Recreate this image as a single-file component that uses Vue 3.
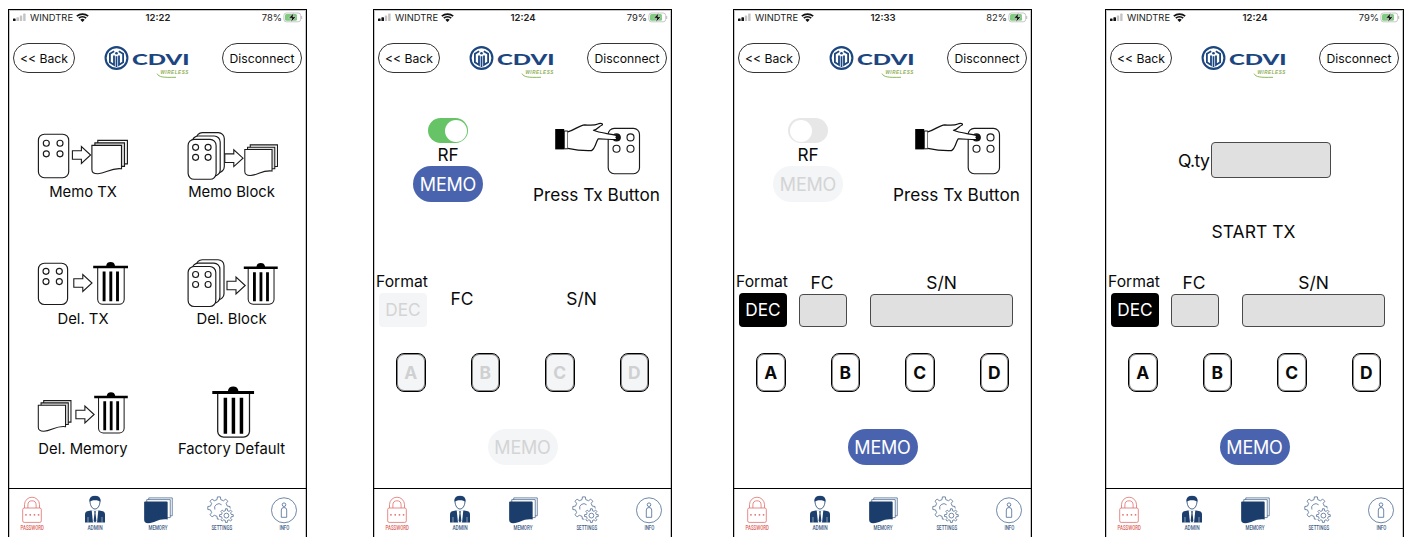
<script setup>
import { h } from 'vue'

const screens = [
  { kind: 'menu', time: '12:22', battery: '78%', bars: 1 },
  { kind: 'rf', time: '12:24', battery: '79%', bars: 2, rf: true },
  { kind: 'rf', time: '12:33', battery: '82%', bars: 2, rf: false },
  { kind: 'qty', time: '12:24', battery: '79%', bars: 2 },
]
const keys = ['A', 'B', 'C', 'D']
const signal = [
  { x: 13, w: 2.6, h: 2.6 },
  { x: 16.4, w: 2.6, h: 3.8 },
  { x: 19.8, w: 2.4, h: 5.6 },
  { x: 23.2, w: 2.4, h: 7.4 },
]
const ink = { fill: '#fff', stroke: '#1a1a1a', 'stroke-width': 1.15 }

// key fob with four buttons
const Fob = ({ x, y, w, ht, cx, cy, dx, dy, r = 3, stack }) => {
  const box = (ox, oy) => h('rect', { x: x + ox, y: y + oy, width: w, height: ht, rx: 6, ...ink })
  const dots = [[0, 0], [1, 0], [0, 1], [1, 1]].map(([i, j]) =>
    h('circle', { cx: cx + i * dx, cy: cy + j * dy, r, ...ink }))
  return h('g', [...(stack ? [box(8.2, -6.8), box(4.1, -3.4)] : []), box(0, 0), ...dots])
}
Fob.props = ['x', 'y', 'w', 'ht', 'cx', 'cy', 'dx', 'dy', 'r', 'stack']

const Arrow = ({ x, y }) => h('path', {
  d: `M${x} ${y - 4.3}h9v-4.1l9.2 8.4l-9.2 8.4v-4.1h-9z`, ...ink, 'stroke-width': 1.1,
})
Arrow.props = ['x', 'y']

// stack of memory sheets
const sheet = 'M0 0H29.6V23.4C19 22 14 28.3 6 28.3C1.5 28.3 0 26.8 0 24Z'
const Sheets = ({ x, y, s = 1 }) => h('g', { transform: `translate(${x} ${y}) scale(${s})` },
  [[5.9, -5], [3, -2.5], [0, 0]].map(([a, b], i) =>
    h('path', { d: i === 2 ? sheet : 'M0 0H29.6V23.4H22L0 20Z', transform: `translate(${a} ${b})`, ...ink, fill: i === 1 ? '#ddd' : '#fff' })))
Sheets.props = ['x', 'y', 's']

const Trash = ({ x, y, s = 1 }) => h('g', { transform: `translate(${x} ${y}) scale(${s})` }, [
  h('path', { d: 'M4.5 6V37.5A5 5 0 0 0 9.5 42.2H26A5 5 0 0 0 31 37.5V6', ...ink, 'stroke-width': 1.05 }),
  h('path', { d: 'M0 3.7H13C13.4 1 15 0 17.4 0S21.4 1 21.8 3.7H34.8V6.2H0Z', fill: '#000' }),
  h('path', { d: 'M10.9 9.4V39.3M17.6 9.4V39.3M24.3 9.4V39.3', stroke: '#000', 'stroke-width': 2.9, fill: 'none' }),
])
Trash.props = ['x', 'y', 's']

const gear = (cx, cy, n, ro, ri) => {
  const step = (Math.PI * 2) / n
  const pts = []
  for (let i = 0; i < n; i++) {
    for (const [f, r] of [[-0.28, ri], [-0.17, ro], [0.17, ro], [0.28, ri]]) {
      const a = (i + f) * step - Math.PI / 2
      pts.push(`${(cx + r * Math.cos(a)).toFixed(2)} ${(cy + r * Math.sin(a)).toFixed(2)}`)
    }
  }
  return `M${pts.join('L')}Z`
}
const bigGear = gear(218.8, 508, 8, 11.2, 8.6)
const smallGear = gear(226.3, 515.6, 8, 6.9, 5)
</script>

<template>
  <main class="board">
    <section v-for="(s, i) in screens" :key="i" class="phone">
      <div class="status">
        <span class="carrier">
          <svg class="bars" width="13" height="9" viewBox="13 13 13 9">
            <rect v-for="(b, n) in signal" :key="n" :x="b.x" :y="21 - b.h" :width="b.w" :height="b.h" rx=".6"
              :fill="n < s.bars ? '#111' : '#c4c4c4'" />
          </svg>
          WINDTRE
          <svg class="wifi" width="13" height="9" viewBox="0 0 13 9">
            <path d="M.8 3.2A8.6 8.6 0 0 1 12.2 3.2M2.8 5.2A5.6 5.6 0 0 1 10.2 5.2" fill="none" stroke="#111" stroke-width="1.7" />
            <path d="M6.5 8.9L4.3 6.7A3.2 3.2 0 0 1 8.7 6.7Z" fill="#111" />
          </svg>
        </span>
        <b class="time">{{ s.time }}</b>
        <span class="power">{{ s.battery }}
          <svg width="20" height="11" viewBox="0 0 20 11">
            <rect x=".9" y="1" width="16.8" height="8.8" rx="2.5" fill="#fff" stroke="#b9b9b9" stroke-width=".8" />
            <rect x="2" y="2.1" width="12" height="6.6" rx="1.5" fill="#7fcb7f" />
            <path d="M18.7 4v3" stroke="#bbb" stroke-width="1" />
            <path d="M10.8 .8L5.6 6.2H8.8L7.8 10.2L13.2 4.8H9.9Z" fill="#111" stroke="#fff" stroke-width=".5" />
          </svg>
        </span>
      </div>

      <header class="head">
        <button class="pill back">&lt;&lt; Back</button>
        <svg class="logo" width="88" height="36" viewBox="103 45 88 36">
          <circle cx="116.5" cy="58" r="10.9" fill="#fff" stroke="#1c4680" stroke-width="2.1" />
          <path d="M114.2 51.2L109.9 53.7V62.3L114 64.9V55.5M118.8 51.2L123.1 53.7V62.3L119 64.9V55.5" fill="none" stroke="#1c4680" stroke-width="1.8" />
          <path d="M116.5 56.2V67" stroke="#1c4680" stroke-width="1.7" />
          <circle cx="116.5" cy="53.2" r="1.3" fill="#1c4680" />
          <text x="132" y="64.5" font-family="Lato" font-weight="900" font-size="14.8" textLength="57.500" lengthAdjust="spacingAndGlyphs" fill="#1c4680">CDVI</text>
          <text x="160.400" y="74.300" font-family="Liberation Sans" font-weight="700" font-style="italic" font-size="4.600" textLength="28" fill="#8fae58">WIRELESS</text>
          <path d="M157 73.600C159 77.200 163 77.600 176 77.300" fill="none" stroke="#7fb04a" stroke-width=".9" />
        </svg>
        <button class="pill disc">Disconnect</button>
      </header>

      <div v-if="s.kind === 'menu'" class="body menu">
        <figure>
          <svg width="100" height="52" viewBox="33 130 100 52">
            <Fob :x="38.4" :y="134.2" :w="30.3" :ht="43.5" :cx="46.3" :cy="143.2" :dx="13.7" :dy="10.6" />
            <Arrow :x="72.4" :y="155" />
            <Sheets :x="91.9" :y="145.4" />
          </svg>
          <figcaption>Memo TX</figcaption>
        </figure>
        <figure>
          <svg width="100" height="52" viewBox="181.5 130 100 52">
            <Fob :x="187.6" :y="139.4" :w="28" :ht="39.9" :cx="195.1" :cy="147.3" :dx="12.5" :dy="10" :stack="true" />
            <Arrow :x="224.3" :y="158.2" />
            <Sheets :x="244.3" :y="149.5" :s=".92" />
          </svg>
          <figcaption>Memo Block</figcaption>
        </figure>
        <figure>
          <svg width="100" height="53" viewBox="33 256 100 53">
            <Fob :x="38.4" :y="263.2" :w="29.2" :ht="41.3" :cx="46" :cy="271.3" :dx="13.3" :dy="10.3" />
            <Arrow :x="73.8" :y="283" />
            <Trash :x="93.2" :y="262" />
          </svg>
          <figcaption>Del. TX</figcaption>
        </figure>
        <figure>
          <svg width="100" height="53" viewBox="181.5 256 100 53">
            <Fob :x="187.6" :y="266.5" :w="27.7" :ht="40" :cx="195.1" :cy="274.5" :dx="12.5" :dy="10" :stack="true" />
            <Arrow :x="226.5" :y="285.5" />
            <Trash :x="243.3" :y="263" :s=".975" />
          </svg>
          <figcaption>Del. Block</figcaption>
        </figure>
        <figure>
          <svg width="100" height="53" viewBox="33 386 100 53">
            <Sheets :x="38.3" :y="405.2" :s=".92" />
            <Arrow :x="75.9" :y="414.5" />
            <Trash :x="94.2" :y="392.3" :s=".965" />
          </svg>
          <figcaption>Del. Memory</figcaption>
        </figure>
        <figure>
          <svg width="100" height="53" viewBox="181.5 386 100 53">
            <Trash :x="211.8" :y="386.5" :s="1.2" />
          </svg>
          <figcaption>Factory Default</figcaption>
        </figure>
      </div>

      <div v-else class="body">
        <div v-if="s.kind === 'rf'" class="top">
          <div class="rf">
            <span class="toggle" :class="{ on: s.rf }"><i></i></span>
            <span class="rf-label">RF</span>
            <button class="memo" :class="{ off: !s.rf }">MEMO</button>
          </div>
          <div class="press">
            <svg width="100" height="54" viewBox="181.8 122 100 54">
              <Fob :x="243" :y="128.4" :w="31.3" :ht="45.3" :cx="251.3" :cy="137.4" :dx="14" :dy="11.3" :r="3.5" />
              <circle cx="252" cy="137.4" r="3.5" fill="#111" />
              <path d="M199 131H202.6V148.8H199Z" fill="#fff" stroke="#111" />
              <path d="M202.6 131.8C209 130.5 214 125.2 219.5 124.8C226 125.7 229.5 125.5 233.5 123.7C236.5 122.9 238.5 123.9 236.5 125.2C234.2 126 233 129 228.3 130.3C233 132.6 243 133.6 251 135.3C254.3 136.1 254 139.6 250.5 139.7C244 139.7 238 138.7 233 138.9C230.6 142 230.3 148.5 226.3 150.6C218 150.9 210 150 202.6 148.3" fill="#fff" stroke="#111" stroke-width="1.2" stroke-linejoin="round" />
              <circle cx="252.6" cy="137.3" r="2.3" fill="#111" />
              <rect x="190" y="129" width="9" height="20.4" fill="#000" />
            </svg>
            <span>Press Tx Button</span>
          </div>
        </div>
        <div v-else class="top qty">
          <label class="qty-row"><span>Q.ty</span><span class="field"></span></label>
          <div class="start">START TX</div>
        </div>

        <div class="form" :class="{ bare: s.rf }">
          <div class="col format"><span>Format</span><b class="dec" :class="{ off: s.rf }">DEC</b></div>
          <div class="col fc"><span>FC</span><span v-if="!s.rf" class="field"></span></div>
          <div class="col sn"><span>S/N</span><span v-if="!s.rf" class="field"></span></div>
        </div>
        <div class="keys">
          <button v-for="k in keys" :key="k" class="key" :class="{ off: s.rf }">{{ k }}</button>
        </div>
        <button class="memo bottom" :class="{ off: s.rf }">MEMO</button>
      </div>

      <nav class="tabs">
        <svg width="40" height="40" viewBox="11.5 493 40 40">
          <g fill="none" stroke="#dd6763" stroke-width=".75">
            <path d="M24 508V504.7a7.5 7.5 0 0 1 15 0V508M27.4 508V504.9a4.1 4.1 0 0 1 8.2 0V508" />
            <rect x="22.2" y="508" width="18.6" height="14.4" rx="1.5" />
          </g>
          <path d="M24.7 514.8h1.5M29 514.8h1.5M33.2 514.8h1.5M37.3 514.8h1.5" stroke="#d9504c" stroke-width="1.3" />
          <text x="20" y="530.3" textLength="23.4" lengthAdjust="spacingAndGlyphs" class="tab-label red">PASSWORD</text>
        </svg>
        <svg width="40" height="40" viewBox="74.6 493 40 40">
          <path d="M89.6 501.5C89.3 497.5 91.3 496.3 94.6 496.3S99.9 497.5 99.6 501.5C99.3 506 97.3 509 94.6 509S89.9 506 89.6 501.5Z" fill="#fff" stroke="#1c3f6e" stroke-width=".8" />
          <path d="M89.2 501.8C88.9 497.6 91 496 94.6 496S100.3 497.6 100 501.8C98.5 499.6 90.7 499.6 89.2 501.8Z" fill="#1c3f6e" />
          <path d="M90.3 510.5H98.9L102.5 511.3C104 511.8 104.6 513 104.6 514.5V522.6H84.6V514.5C84.6 513 85.2 511.8 86.7 511.3Z" fill="#1c3f6e" />
          <path d="M91.3 510.3H97.9L96.6 522.7H92.6Z" fill="#fff" />
          <path d="M93.6 511.2H95.6L95.1 513L96 521L94.6 522.6L93.2 521L94.1 513Z" fill="#1c3f6e" />
          <path d="M87.6 517V522.6M101.6 517V522.6" stroke="#fff" stroke-width=".5" />
          <text x="87" y="530.3" textLength="15.3" lengthAdjust="spacingAndGlyphs" class="tab-label">ADMIN</text>
        </svg>
        <svg width="40" height="40" viewBox="137.75 493 40 40">
          <g fill="#fff" stroke="#365984" stroke-width=".7">
            <path d="M148.5 497.9H172V515.8H148.5Z" />
            <path d="M146.5 499.6H170V517.6H146.5Z" />
          </g>
          <path d="M144.8 501.4H166.5Q167.4 501.4 167.4 502.3V519.5C158 518.3 154.5 523.3 148 523.3C145 523.3 143.9 522 143.9 519.5V502.3Q143.9 501.4 144.8 501.4Z" fill="#1a3d6b" />
          <text x="148.2" y="530.4" textLength="19" lengthAdjust="spacingAndGlyphs" class="tab-label">MEMORY</text>
        </svg>
        <svg width="40" height="40" viewBox="200.9 493 40 40">
          <g fill="none" stroke="#526d92" stroke-width=".8" stroke-linejoin="round">
            <path :d="bigGear" />
            <path d="M214.8 509.5A4.2 4.2 0 0 1 221.5 504.8" />
            <circle cx="226.3" cy="515.6" r="8" fill="#fff" stroke="none" />
            <path :d="smallGear" />
            <circle cx="226.3" cy="515.6" r="2.4" />
          </g>
          <text x="211.3" y="530.4" textLength="20.8" lengthAdjust="spacingAndGlyphs" class="tab-label">SETTINGS</text>
        </svg>
        <svg width="40" height="40" viewBox="264 493 40 40">
          <g fill="none" stroke="#4a6993" stroke-width=".8">
            <circle cx="284" cy="510.3" r="12.5" />
            <circle cx="284" cy="504.7" r="1.8" />
            <path d="M281.3 517.3V510Q281.3 507.5 284 507.5T286.7 510V517.3Z" />
          </g>
          <text x="279.4" y="530.4" textLength="10" lengthAdjust="spacingAndGlyphs" class="tab-label">INFO</text>
        </svg>
      </nav>
    </section>
  </main>
</template>

<style>
html, body { background: #fff; overflow: hidden; }
</style>

<style scoped>
.board {
  display: grid;
  grid-template-columns: 365px 360px 372px 299px;
  box-sizing: border-box;
  height: 537px;
  padding: 9px 0 0 8px;
  overflow: hidden;
  font-family: "Inter", sans-serif;
  color: #0a0a0a;
}
.phone {
  box-sizing: border-box;
  display: flex;
  flex-direction: column;
  width: 299px;
  height: 540px;
  border: 1px solid #000;
  box-shadow: inset 0 0 0 1px rgba(0, 0, 0, .22);
}
button { font-family: inherit; color: inherit; padding: 0; margin: 0; box-sizing: border-box; }
svg { display: block; overflow: visible; }

.status {
  display: grid;
  grid-template-columns: 1fr auto 1fr;
  align-items: center;
  height: 15px;
  padding: 0 3px 0 4px;
  font-size: 9.4px;
  line-height: 15px;
  color: #222;
}
.carrier, .power { display: flex; align-items: center; }
.bars { margin-right: 4px; }
.wifi { margin-left: 3px; }
.time { font-size: 9.5px; font-weight: 600; }
.power { justify-content: flex-end; gap: 1px; }

.head {
  display: flex;
  justify-content: space-between;
  flex: none;
  height: 30px;
  margin-top: 18px;
  padding: 0 4px;
}
.pill {
  height: 30px;
  border: 1px solid #333;
  border-radius: 15px;
  background: #fff;
  font-size: 12.2px;
}
.back { width: 62px; }
.disc { width: 80px; }
.logo { margin: 2px 3px 0 0; }

.body { flex: none; height: 415px; display: flex; flex-direction: column; }
.menu {
  display: grid;
  grid-template-columns: 148px 149px;
  grid-template-rows: 126px 130px 73px;
  box-sizing: border-box;
  padding-top: 57px;
}
figure { display: flex; flex-direction: column; align-items: center; margin: 0; }
figcaption { font-size: 14.8px; line-height: 20px; white-space: nowrap; }

.top { display: grid; grid-template-columns: 148px 149px; flex: none; height: 198px; }
.rf { display: flex; flex-direction: column; align-items: center; padding-top: 45px; }
.toggle { box-sizing: border-box; display: flex; width: 40px; height: 25px; padding: 1.5px; border-radius: 13px; background: #e7e7e8; }
.toggle i { width: 22px; height: 22px; border-radius: 50%; background: #fff; }
.toggle.on { background: #67c466; justify-content: flex-end; }
.rf-label { font-size: 17.2px; line-height: 23px; }
.memo {
  width: 70px;
  height: 36px;
  border: 0;
  border-radius: 18px;
  background: #4a63ae;
  color: #fff;
  font-size: 18px;
  letter-spacing: -.2px;
}
.memo.off { background: #f4f5f6; color: #d3d4d5; }
.press { display: flex; flex-direction: column; align-items: center; padding-top: 49px; }
.press span { margin-top: 7px; font-size: 17.2px; line-height: 24px; white-space: nowrap; }

.field { box-sizing: border-box; border: 1px solid #4a4a4a; border-radius: 4px; background: #e0e0e0; }
.qty { display: flex; flex-direction: column; }
.qty-row { display: flex; align-items: center; gap: 2px; margin: 69px 0 0 72px; font-size: 17.6px; letter-spacing: -.6px; }
.qty-row > span:first-child { width: 31px; }
.qty-row .field { width: 120px; height: 36px; }
.start { width: 295px; margin-top: 42px; font-size: 17.5px; line-height: 24px; text-align: center; }

.form { display: flex; flex: none; height: 56px; padding-left: 2px; }
.col { display: flex; flex-direction: column; align-items: center; font-size: 17.4px; line-height: 23px; }
.format { width: 54px; font-size: 15.7px; line-height: 21px; }
.format > span { margin-right: 2px; }
.fc > span:first-child { margin-right: 2px; }
.dec { width: 48px; height: 34px; margin-top: 1px; border-radius: 4px; background: #000; color: #fff; font-size: 17.2px; font-weight: 400; line-height: 34px; text-align: center; }
.dec.off { background: #f4f5f6; color: #d3d4d5; }
.fc { width: 48px; margin-left: 9px; }
.sn { width: 143px; margin-left: 23px; }
.col .field { width: 100%; height: 33px; }
.bare .fc, .bare .sn { padding-top: 16px; }

.keys { display: flex; justify-content: space-between; flex: none; width: 253px; margin: 26px 0 0 22px; }
.key {
  width: 29.5px;
  height: 39px;
  border: 1px solid #000;
  border-radius: 8px;
  background: #fff;
  box-shadow: inset 0 0 0 1px rgba(0, 0, 0, .45);
  font-size: 17.4px;
  line-height: 37px;
  font-weight: 700;
}
.key.off { background: #f4f5f6; color: #cfd0d1; }
.bottom { margin: 37px 0 0 113.5px; }

.tabs { display: flex; justify-content: space-between; flex: none; padding: 4px 2px 0 2.5px; border-top: 1px solid #000; }
.tab-label { font: 500 6.8px "Roboto", sans-serif; fill: #3f5c85; }
.tab-label.red { fill: #dc5f5b; }
</style>
